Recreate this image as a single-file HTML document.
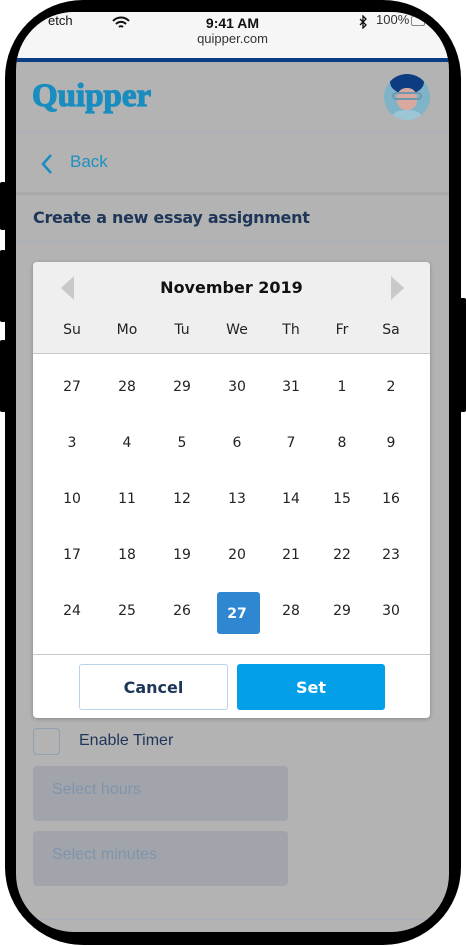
<!DOCTYPE html>
<html><head><style>
*{margin:0;padding:0;box-sizing:border-box}
body{width:466px;height:946px;background:#fff;position:relative;overflow:hidden;font-family:"Liberation Sans","DejaVu Sans",sans-serif}
.abs{position:absolute}
.frame{left:5px;top:0;width:456px;height:945px;background:#000;border-radius:78px}
.screen{left:16px;top:12px;width:433px;height:920px;background:#b3b3b3;border-radius:58px;overflow:hidden}
.btn{background:#000;width:6px}
.d{position:absolute;width:40px;margin-left:-20px;text-align:center;font-size:14px;color:#222;font-family:"DejaVu Sans",sans-serif}
</style></head><body>
<div class="abs btn" style="left:0;top:182px;height:48px;border-radius:2px"></div>
<div class="abs btn" style="left:0;top:250px;height:72px;border-radius:2px"></div>
<div class="abs btn" style="left:0;top:340px;height:72px;border-radius:2px"></div>
<div class="abs btn" style="left:460px;top:298px;height:114px;border-radius:2px"></div>
<div class="abs frame"></div>
<div class="abs screen">
  <div class="abs" style="left:0;top:0;width:433px;height:46px;background:#f6f6f6"></div>
  <div class="abs" style="left:32px;top:1px;font-size:13px;color:#111">etch</div>
  <svg class="abs" style="left:96px;top:4px" width="18" height="14" viewBox="0 0 18 14"><path d="M1 5a11 11 0 0 1 16 0M4 8a7 7 0 0 1 10 0M7 11a3 3 0 0 1 4 0" stroke="#111" stroke-width="2" fill="none"/></svg>
  <div class="abs" style="left:0;width:433px;top:3px;text-align:center;font-size:14px;font-weight:bold;color:#111">9:41 AM</div>
  <div class="abs" style="left:0;width:433px;top:19px;text-align:center;font-size:13px;color:#333">quipper.com</div>
  <svg class="abs" style="left:343px;top:3px" width="8" height="14" viewBox="0 0 8 14"><path d="M1 4l6 6-3 3V1l3 3-6 6" stroke="#111" stroke-width="1.3" fill="none"/></svg>
  <div class="abs" style="left:360px;top:0px;font-size:13px;color:#333">100%</div>
  <div class="abs" style="left:395px;top:4px;width:14px;height:10px;border:1px solid #888;border-radius:2px"></div>
  <div class="abs" style="left:0;top:46px;width:433px;height:4px;background:#0b3d86"></div>
  <div class="abs" style="left:16px;top:66px;font-family:'Liberation Serif',serif;font-weight:bold;font-size:33px;color:#1a8dc0;-webkit-text-stroke:1.2px #1a8dc0;letter-spacing:0px">Quipper</div>
  <div class="abs" style="left:368px;top:62px;width:46px;height:46px;border-radius:50%;background:#7fb4c8;overflow:hidden">
    <div class="abs" style="left:6px;top:-4px;width:34px;height:24px;border-radius:50%;background:#0d3d80"></div>
    <div class="abs" style="left:13px;top:14px;width:20px;height:22px;border-radius:45%;background:#d9a9a0"></div>
    <div class="abs" style="left:8px;top:18px;width:30px;height:8px;border:2px solid #6f97b0;border-radius:4px"></div>
    <div class="abs" style="left:8px;top:36px;width:30px;height:14px;border-radius:50%;background:#9cc6d6"></div>
  </div>
  <div class="abs" style="left:0;top:120px;width:433px;height:1px;background:#a7b0bb"></div>
  <svg class="abs" style="left:24px;top:141px" width="14" height="22" viewBox="0 0 14 22"><path d="M11 2L3 11l8 9" stroke="#1a8dc0" stroke-width="2.5" fill="none"/></svg>
  <div class="abs" style="left:54px;top:140px;font-size:17px;color:#1f8fc0">Back</div>
  <div class="abs" style="left:0;top:180px;width:433px;height:3px;background:#a9a9a9"></div>
  <div class="abs" style="left:17px;top:196px;font-size:16px;font-weight:bold;color:#1e3658;font-family:'DejaVu Sans',sans-serif;letter-spacing:-0.3px">Create a new essay assignment</div>
  <div class="abs" style="left:0;top:229px;width:433px;height:1px;background:#a7b0bb"></div>
  <div class="abs" style="left:17px;top:716px;width:27px;height:27px;border:1px solid #8fa0b0;border-radius:4px"></div>
  <div class="abs" style="left:63px;top:720px;font-size:16px;color:#1e3658">Enable Timer</div>
  <div class="abs" style="left:17px;top:754px;width:255px;height:55px;background:#a1a5ab;border-radius:4px"></div>
  <div class="abs" style="left:36px;top:769px;font-size:16px;color:#7f94ab">Select hours</div>
  <div class="abs" style="left:17px;top:819px;width:255px;height:55px;background:#a1a5ab;border-radius:4px"></div>
  <div class="abs" style="left:36px;top:834px;font-size:16px;color:#7f94ab">Select minutes</div>
  <div class="abs" style="left:0;top:907px;width:433px;height:1px;background:#a7b0bb"></div>
</div>
<div class="abs" style="left:33px;top:262px;width:397px;height:456px;background:#fff;border-radius:4px;box-shadow:0 1px 4px rgba(0,0,0,.25);overflow:hidden">
  <div class="abs" style="left:0;top:0;width:397px;height:92px;background:#efefef;border-bottom:1px solid #c8c8c8"></div>
  <div class="abs" style="left:28px;top:14px;width:0;height:0;border-top:12px solid transparent;border-bottom:12px solid transparent;border-right:13px solid #c9c9c9"></div>
  <div class="abs" style="left:358px;top:14px;width:0;height:0;border-top:12px solid transparent;border-bottom:12px solid transparent;border-left:13px solid #c9c9c9"></div>
  <div class="abs" style="left:0;width:397px;top:16px;text-align:center;font-size:16px;font-weight:bold;color:#111;font-family:'DejaVu Sans',sans-serif">November 2019</div>
  <div class="abs" style="left:0;top:392px;width:397px;height:1px;background:#c8c8c8"></div>
  <div class="abs" style="left:46px;top:402px;width:149px;height:46px;border:1px solid #b9d3ea;border-radius:3px;text-align:center;line-height:46px;font-size:16px;font-weight:bold;color:#1e3658;font-family:'DejaVu Sans',sans-serif">Cancel</div>
  <div class="abs" style="left:204px;top:402px;width:148px;height:46px;background:#03a0e9;border-radius:3px;text-align:center;line-height:48px;font-size:16px;font-weight:bold;color:#fff;font-family:'DejaVu Sans',sans-serif">Set</div>
  <div class="abs" style="left:184px;top:330px;width:43px;height:42px;background:#2e87d0;border-radius:3px"></div>
</div>
<div id="cal"></div>
<script>
var cx=[72,127,182,237,291,342,391];
var h=['Su','Mo','Tu','We','Th','Fr','Sa'];
var days=[27,28,29,30,31,1,2,3,4,5,6,7,8,9,10,11,12,13,14,15,16,17,18,19,20,21,22,23,24,25,26,27,28,29,30];
var s='';
for(var i=0;i<7;i++)s+='<div class="d" style="left:'+cx[i]+'px;top:322px">'+h[i]+'</div>';
for(var j=0;j<days.length;j++){var r=Math.floor(j/7),c=j%7;var sel=(j==31);
s+='<div class="d" style="left:'+cx[c]+'px;top:'+(379+r*56+(sel?3:0))+'px;'+(sel?'color:#fff;font-weight:bold':'')+'">'+days[j]+'</div>';}
document.getElementById('cal').innerHTML=s;
</script>
</body></html>
